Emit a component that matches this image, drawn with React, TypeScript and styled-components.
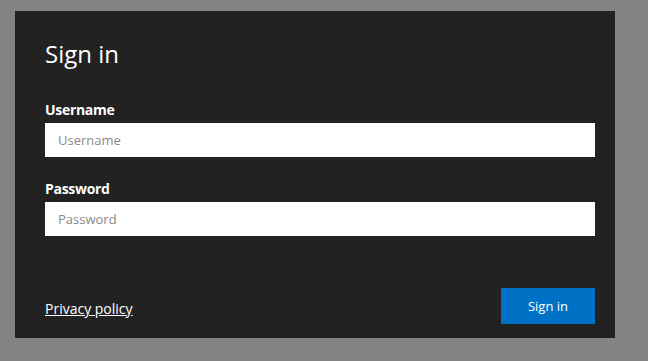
import React from "react";
import styled, { createGlobalStyle } from "styled-components";

const Global = createGlobalStyle`
  html, body { margin: 0; padding: 0; background: #838383; }
  body { font-family: "Open Sans", "Noto Sans", "Liberation Sans", sans-serif; }
  * { box-sizing: border-box; }
`;

const Page = styled.div`
  width: 648px;
  height: 361px;
  padding: 11px 0 0 15px;
`;

const Panel = styled.form`
  width: 600px;
  height: 327px;
  background: #222222;
  padding: 27px 20px 14px 30px;
  display: flex;
  flex-direction: column;
`;

const Title = styled.h1`
  margin: 0 0 30px;
  font-size: 24px;
  line-height: 32px;
  font-weight: 400;
  color: #ffffff;
`;

const Field = styled.div`
  display: flex;
  flex-direction: column;
  margin-bottom: 22px;
`;

const Label = styled.label`
  font-size: 14px;
  line-height: 20px;
  font-weight: 700;
  color: #ffffff;
  letter-spacing: -0.3px;
  margin-bottom: 3px;
`;

const Input = styled.input`
  width: 550px;
  height: 34px;
  border: none;
  outline: none;
  background: #ffffff;
  padding: 0 13px;
  font-family: inherit;
  font-size: 13px;
  color: #222;
  &::placeholder { color: #8a8a8a; }
`;

const Footer = styled.div`
  margin-top: auto;
  width: 550px;
  display: flex;
  justify-content: space-between;
  align-items: center;
`;

const Link = styled.a`
  color: #ffffff;
  font-size: 14px;
  text-decoration: underline;
  cursor: pointer;
  margin-top: 4px;
`;

const Button = styled.button`
  width: 94px;
  height: 36px;
  border: none;
  background: #0072c6;
  color: #ffffff;
  font-family: inherit;
  font-size: 13px;
  cursor: pointer;
`;

export default function App() {
  return (
    <Page>
      <Global />
      <Panel onSubmit={(e) => e.preventDefault()}>
        <Title>Sign in</Title>
        <Field>
          <Label htmlFor="u">Username</Label>
          <Input id="u" placeholder="Username" />
        </Field>
        <Field>
          <Label htmlFor="p">Password</Label>
          <Input id="p" type="password" placeholder="Password" />
        </Field>
        <Footer>
          <Link>Privacy policy</Link>
          <Button type="submit">Sign in</Button>
        </Footer>
      </Panel>
    </Page>
  );
}
